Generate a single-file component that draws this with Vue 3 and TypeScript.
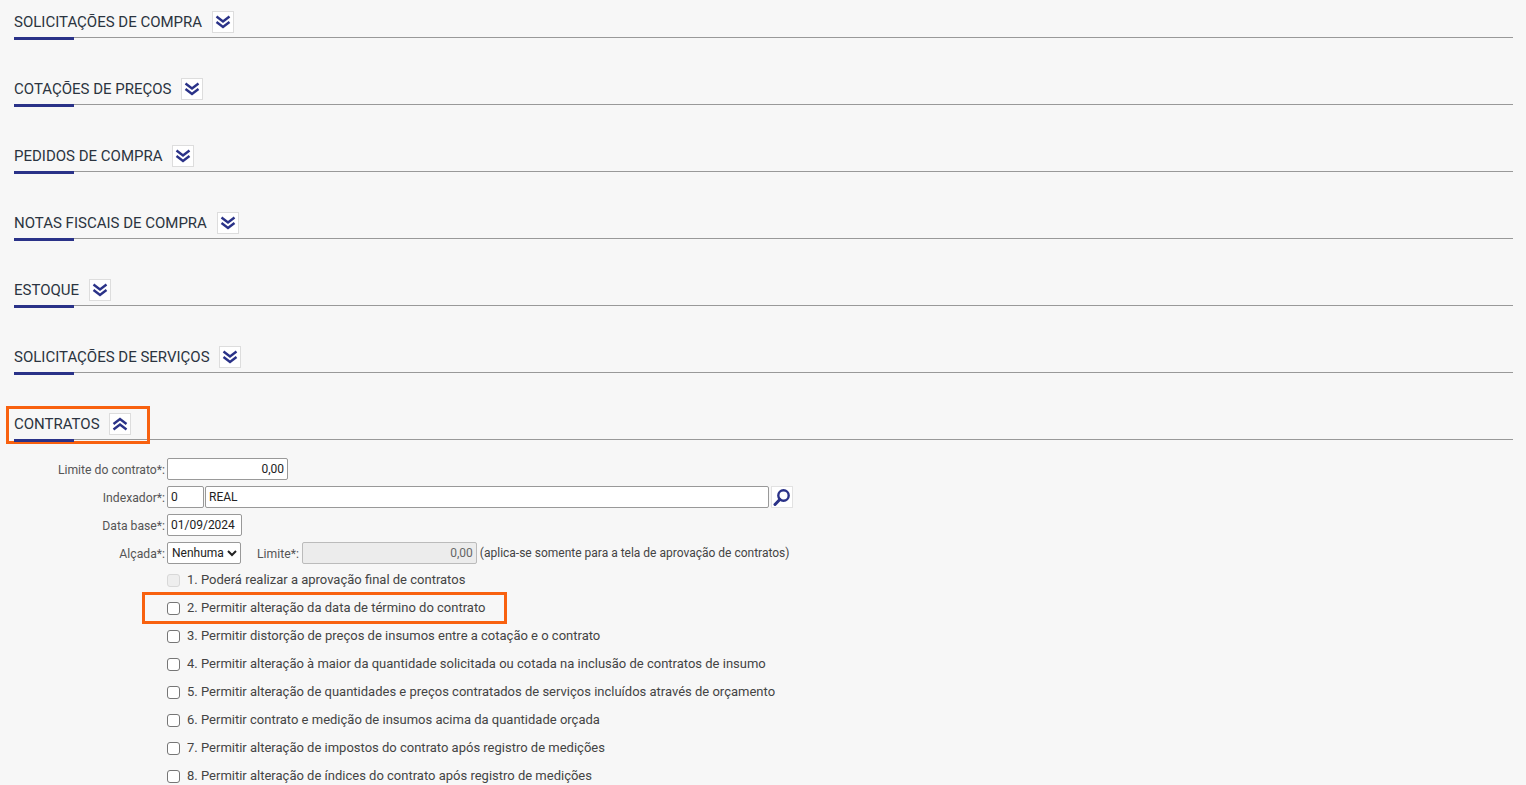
<script setup lang="ts">
const sections: string[] = [
  'SOLICITAÇÕES DE COMPRA',
  'COTAÇÕES DE PREÇOS',
  'PEDIDOS DE COMPRA',
  'NOTAS FISCAIS DE COMPRA',
  'ESTOQUE',
  'SOLICITAÇÕES DE SERVIÇOS',
]
const checks: string[] = [
  '2. Permitir alteração da data de término do contrato',
  '3. Permitir distorção de preços de insumos entre a cotação e o contrato',
  '4. Permitir alteração à maior da quantidade solicitada ou cotada na inclusão de contratos de insumo',
  '5. Permitir alteração de quantidades e preços contratados de serviços incluídos através de orçamento',
  '6. Permitir contrato e medição de insumos acima da quantidade orçada',
  '7. Permitir alteração de impostos do contrato após registro de medições',
  '8. Permitir alteração de índices do contrato após registro de medições',
]
</script>

<template>
  <main class="page">
    <section v-for="s in sections" :key="s" class="section">
      <header class="head">
        <h2 class="title">{{ s }}</h2>
        <button class="toggle" type="button">
          <svg width="16" height="16" viewBox="0 0 16 16"><path d="M1.500 2.500 8 7.500l6.500-5M1.500 8 8 13l6.500-5" fill="none" stroke="#2a3288" stroke-width="2.400"/></svg>
        </button>
      </header>
    </section>
    <section class="section last">
      <header class="head">
        <h2 class="title">CONTRATOS</h2>
        <button class="toggle" type="button">
          <svg width="16" height="16" viewBox="0 0 16 16"><path d="M1.500 8 8 3l6.500 5M1.500 13.500 8 8.500l6.500 5" fill="none" stroke="#2a3288" stroke-width="2.400"/></svg>
        </button>
        <span class="mark mark-title"></span>
      </header>
      <form class="form">
        <div class="row">
          <label class="lab">Limite do contrato*:</label>
          <input class="inp num w-limit" value="0,00" />
        </div>
        <div class="row">
          <label class="lab">Indexador*:</label>
          <input class="inp w-code" value="0" />
          <input class="inp w-name" value="REAL" />
          <button class="search" type="button">
            <svg width="18" height="18" viewBox="0 0 18 18"><circle cx="10.500" cy="7.500" r="5.200" fill="none" stroke="#2a3288" stroke-width="2.400"/><path d="M6.800 11.500 2 16.500" stroke="#2a3288" stroke-width="3" stroke-linecap="round"/></svg>
          </button>
        </div>
        <div class="row">
          <label class="lab">Data base*:</label>
          <input class="inp w-date" value="01/09/2024" />
        </div>
        <div class="row short">
          <label class="lab">Alçada*:</label>
          <select class="sel"><option>Nenhuma</option></select>
          <label class="lab2">Limite*:</label>
          <input class="inp num w-dis" value="0,00" disabled />
          <span class="note">(aplica-se somente para a tela de aprovação de contratos)</span>
        </div>
        <div class="check disabled">
          <input type="checkbox" disabled />
          <span>1. Poderá realizar a aprovação final de contratos</span>
        </div>
        <div v-for="(c, i) in checks" :key="c" class="check">
          <input type="checkbox" />
          <span>{{ c }}</span>
          <span v-if="i === 0" class="mark mark-check"></span>
        </div>
      </form>
    </section>
  </main>
</template>

<style scoped>
.page {
  height: 785px;
  overflow: hidden;
  box-sizing: border-box;
  padding: 0 13px 0 14px;
  background: #f7f7f7;
  font-family: Roboto, sans-serif;
  color: #333;
}
.section { height: 67px; padding-top: 5px; box-sizing: border-box; }
.section.last { height: auto; }
.head {
  position: relative;
  display: flex;
  align-items: center;
  gap: 9.800px;
  height: 31px;
  padding-top: 1px;
  border-bottom: 1px solid #999;
}
.head::after {
  content: '';
  position: absolute;
  left: 0;
  bottom: -3px;
  width: 60px;
  height: 3px;
  background: #2a3288;
}
.title { margin: 0; font-size: 15px; font-weight: 400; color: #2b3440; }
.toggle {
  display: flex;
  align-items: center;
  justify-content: center;
  width: 22px;
  height: 22px;
  padding: 0;
  background: #fff;
  border: 1px solid #ddd;
}
.form { padding-top: 15px; }
.row { display: flex; align-items: center; height: 28px; font-size: 12.200px; }
.row.short { height: 24px; padding-top: 2px; }
.lab { width: 151px; text-align: right; margin: 2px 2px 0 0; color: #555; white-space: nowrap; }
.lab2 { margin: 2px 3px 0 16px; color: #555; }
.inp {
  box-sizing: border-box;
  height: 22px;
  padding: 0 3px;
  margin: 0;
  font: 12px Roboto, sans-serif;
  color: #222;
  background: #fff;
  border: 1px solid #999;
  border-radius: 2px;
  outline: none;
}
.num { text-align: right; }
.w-limit { width: 121px; }
.w-code { width: 37px; margin-right: 1px; }
.w-name { width: 564px; }
.w-date { width: 75px; }
.w-dis { width: 175px; background: #ececec; color: #666; border-color: #bbb; }
.search {
  display: flex;
  align-items: center;
  justify-content: center;
  width: 22px;
  height: 22px;
  margin-left: 2px;
  padding: 0;
  background: #fff;
  border: 1px solid #e2e2e2;
}
.sel {
  box-sizing: border-box;
  width: 74px;
  height: 22px;
  padding: 0;
  font: 12px Roboto, sans-serif;
  color: #222;
  background: #fff;
  border: 1px solid #999;
  border-radius: 2px;
}
.note { margin-left: 3px; color: #444; font-size: 12px; white-space: nowrap; }
.check {
  position: relative;
  display: flex;
  align-items: center;
  height: 28px;
  padding-left: 153px;
  font-size: 13px;
  color: #444;
  white-space: nowrap;
}
.check input {
  appearance: none;
  box-sizing: border-box;
  width: 13px;
  height: 13px;
  margin: 3px 7px 0 0;
  background: #fff;
  border: 1px solid #767676;
  border-radius: 3px;
}
.check.disabled input { background: #eee; border-color: #d8d8d8; }
.mark { position: absolute; box-sizing: border-box; border: 3px solid #f8610f; pointer-events: none; }
.mark-title { left: -8px; top: -1px; width: 144px; height: 38px; }
.mark-check { left: 128px; top: -1px; width: 365px; height: 32px; }
</style>
